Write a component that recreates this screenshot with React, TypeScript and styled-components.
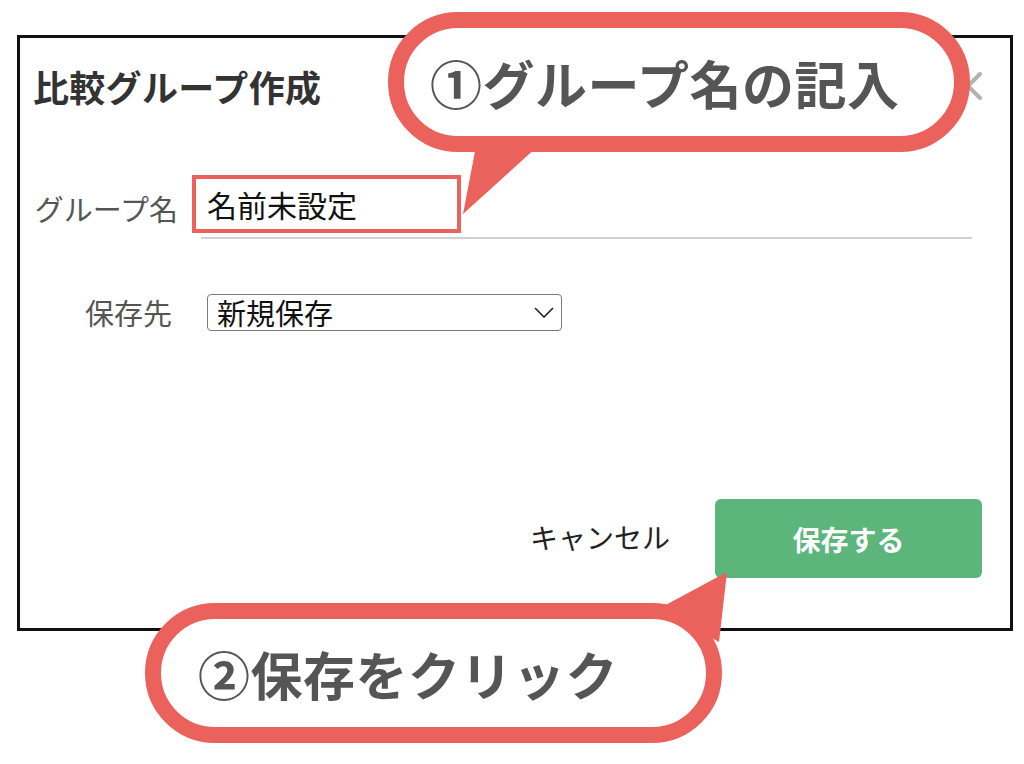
import React from 'react'
import styled, { createGlobalStyle } from 'styled-components'

const RED = '#eb625d'

const GlobalStyle = createGlobalStyle`
  body {
    margin: 0;
    background: #fff;
    font-family: "Noto Sans CJK JP", "Noto Sans", sans-serif;
  }
`

export default function App() {
  return (
    <Page>
      <GlobalStyle />
      <Dialog>
        <Header>
          <Title>比較グループ作成</Title>
          <CloseButton aria-label='閉じる'>
            <svg width='30' height='30' viewBox='0 0 30 30'>
              <path d='M3 3 L27 27 M27 3 L3 27' stroke='currentColor' strokeWidth='4' strokeLinecap='round' />
            </svg>
          </CloseButton>
        </Header>

        <Form>
          <Label>グループ名</Label>
          <NameField>
            名前未設定
            <Highlight />
          </NameField>

          <Label $shift={6}>保存先</Label>
          <SelectWrap>
            <Select defaultValue='new'>
              <option value='new'>新規保存</option>
            </Select>
            <SelectIcon width='20' height='11' viewBox='0 0 20 11'>
              <polyline points='1,1 10,10 19,1' fill='none' stroke='currentColor' strokeWidth='1.6' />
            </SelectIcon>
          </SelectWrap>
        </Form>

        <Footer>
          <CancelButton>キャンセル</CancelButton>
          <SaveButton>保存する</SaveButton>
        </Footer>
      </Dialog>

      <Bubble $left={388} $top={12} $width={582} $pad={42}>
        ①グループ名の記入
      </Bubble>
      <Tail viewBox='0 0 1024 764'>
        <polygon points='476,146 538,146 463,214' fill={RED} />
        <polygon points='727,572 660,608 719,642' fill={RED} />
      </Tail>
      <Bubble $left={145} $top={603} $width={577} $pad={53}>
        ②保存をクリック
      </Bubble>
    </Page>
  )
}

const Page = styled.div`
  position: relative;
  width: 1024px;
  height: 764px;
  padding: 35px 0 0 17px;
  box-sizing: border-box;
  overflow: hidden;
`

const Dialog = styled.div`
  width: 996px;
  height: 596px;
  box-sizing: border-box;
  border: 3px solid #111;
  background: #fff;
  display: flex;
  flex-direction: column;
`

const Header = styled.div`
  display: flex;
  justify-content: space-between;
  align-items: center;
  padding: 30px 27px 0 13px;
`

const Title = styled.h1`
  margin: 0;
  font-size: 36px;
  line-height: 36px;
  font-weight: 700;
  color: #333;
  letter-spacing: 0.3px;
`

const CloseButton = styled.button`
  border: none;
  background: none;
  padding: 0;
  color: #b0b4aa;
  display: flex;
`

const Form = styled.div`
  display: grid;
  grid-template-columns: 158px 1fr;
  column-gap: 14px;
  row-gap: 53px;
  align-items: center;
  margin-top: 73px;
`

const Label = styled.div<{ $shift?: number }>`
  text-align: right;
  padding-right: ${p => p.$shift ?? 0}px;
  font-size: 29px;
  color: #555;
  line-height: 40px;
`

const NameField = styled.div`
  position: relative;
  margin: 0 38px 0 9px;
  height: 62px;
  box-sizing: border-box;
  border-bottom: 2px solid #d0d0d0;
  display: flex;
  align-items: center;
  padding: 0 0 6px 6px;
  font-size: 30px;
  color: #111;
`

const Highlight = styled.div`
  position: absolute;
  left: -9px;
  top: -2px;
  width: 269px;
  height: 58px;
  box-sizing: border-box;
  border: 4px solid ${RED};
`

const SelectWrap = styled.div`
  position: relative;
  width: 355px;
  margin-left: 15px;
`

const Select = styled.select`
  appearance: none;
  width: 100%;
  height: 37px;
  box-sizing: border-box;
  border: 1.5px solid #7a7a7a;
  border-radius: 4px;
  background: #fff;
  padding: 0 0 0 9px;
  font-family: inherit;
  font-size: 29px;
  line-height: 34px;
  color: #111;
`

const SelectIcon = styled.svg`
  position: absolute;
  right: 8px;
  top: 13px;
  color: #222;
  pointer-events: none;
`

const Footer = styled.div`
  margin-top: auto;
  display: flex;
  justify-content: flex-end;
  align-items: center;
  gap: 45px;
  padding: 0 28px 50px 0;
`

const CancelButton = styled.button`
  border: none;
  background: none;
  padding: 0 0 4px;
  font-family: inherit;
  font-size: 28px;
  color: #222;
`

const SaveButton = styled.button`
  width: 267px;
  height: 79px;
  border: none;
  border-radius: 6px;
  background: #5cb67c;
  color: #fff;
  font-family: inherit;
  font-size: 28px;
  font-weight: 700;
`

const Bubble = styled.div<{ $left: number; $top: number; $width: number; $pad: number }>`
  position: absolute;
  left: ${p => p.$left}px;
  top: ${p => p.$top}px;
  width: ${p => p.$width}px;
  height: 140px;
  box-sizing: border-box;
  border: 16px solid ${RED};
  border-radius: 70px;
  background: #fff;
  display: flex;
  align-items: center;
  padding-left: ${p => p.$pad - 16}px;
  font-size: 52px;
  font-weight: 700;
  letter-spacing: 0.5px;
  color: #555;
  white-space: nowrap;
  z-index: 2;
`

const Tail = styled.svg`
  position: absolute;
  left: 0;
  top: 0;
  width: 1024px;
  height: 764px;
  pointer-events: none;
  z-index: 3;
`
